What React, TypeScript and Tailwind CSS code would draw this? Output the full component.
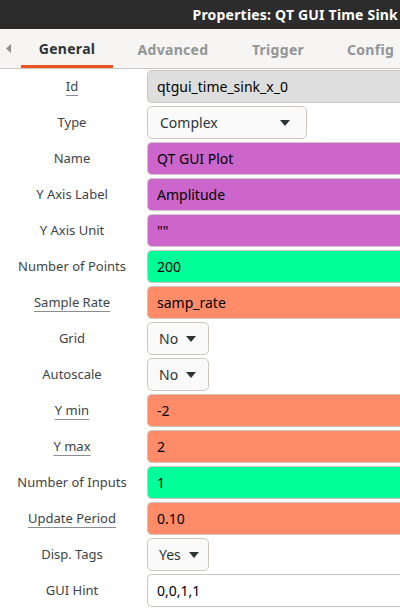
const rows: { label: string; value: string; kind: string; link?: boolean }[] = [
  { label: "Id", value: "qtgui_time_sink_x_0", kind: "id", link: true },
  { label: "Type", value: "Complex", kind: "combo-wide" },
  { label: "Name", value: "QT GUI Plot", kind: "string" },
  { label: "Y Axis Label", value: "Amplitude", kind: "string" },
  { label: "Y Axis Unit", value: '""', kind: "string" },
  { label: "Number of Points", value: "200", kind: "int" },
  { label: "Sample Rate", value: "samp_rate", kind: "raw", link: true },
  { label: "Grid", value: "No", kind: "combo" },
  { label: "Autoscale", value: "No", kind: "combo" },
  { label: "Y min", value: "-2", kind: "raw", link: true },
  { label: "Y max", value: "2", kind: "raw", link: true },
  { label: "Number of Inputs", value: "1", kind: "int" },
  { label: "Update Period", value: "0.10", kind: "raw", link: true },
  { label: "Disp. Tags", value: "Yes", kind: "combo" },
  { label: "GUI Hint", value: "0,0,1,1", kind: "plain" },
];

const fieldBg: Record<string, string> = {
  id: "bg-[#dedede]",
  string: "bg-[#cc66cc]",
  int: "bg-[#00ff99]",
  raw: "bg-[#ff8c69]",
  plain: "bg-white",
};

const Arrow = () => (
  <svg width="10" height="6" viewBox="0 0 10 6" className="shrink-0">
    <path d="M0 0h10L5 6z" fill="#2e3436" />
  </svg>
);

const Field = ({ value, kind }: { value: string; kind: string }) => {
  if (kind === "combo-wide") {
    return (
      <div className="flex h-[33px] w-[160px] items-center justify-between rounded-[5px] border border-[#cdc7c2] bg-[#fafafa] pl-[12px] pr-[16px] text-[#2e3436]">
        <span>{value}</span>
        <Arrow />
      </div>
    );
  }
  if (kind === "combo") {
    return (
      <div className="flex h-[33px] w-[62px] items-center gap-[8px] rounded-[5px] border border-[#cdc7c2] bg-[#fafafa] pl-[11px] text-[#2e3436]">
        <span>{value}</span>
        <Arrow />
      </div>
    );
  }
  return (
    <div
      className={`flex h-[33px] flex-1 items-center rounded-l-[5px] border border-r-0 border-[#cdc7c2] pl-[9px] text-black ${fieldBg[kind]}`}
    >
      {value}
    </div>
  );
};

export default function App() {
  return (
    <div className="h-[612px] w-[400px] overflow-hidden bg-white font-['Noto_Sans',sans-serif]">
      <div className="flex h-[29px] items-center justify-end overflow-hidden whitespace-nowrap bg-[#2c2c2c] pr-[2px] text-[14px] font-bold tracking-[0.2px] text-white">
        Properties: QT GUI Time Sink
      </div>
      <div className="flex h-[40px] items-stretch overflow-hidden border-b border-[#cdc7c2] bg-[#f6f5f4] text-[14px] font-bold whitespace-nowrap">
        <div className="flex w-[21px] shrink-0 items-center pl-[6px]">
          <svg width="5" height="9" viewBox="0 0 5 9">
            <path d="M5 0v9L0 4.5z" fill="#8b8e8f" />
          </svg>
        </div>
        <div className="flex w-[92px] shrink-0 items-center justify-center border-b-[3px] border-[#e95420] pt-[3px] tracking-[0.3px] text-[#2e3436]">
          General
        </div>
        <div className="flex w-[120px] shrink-0 items-center justify-center pt-[1px] tracking-[0.3px] text-[#929595]">Advanced</div>
        <div className="flex w-[90px] shrink-0 items-center justify-center pt-[1px] tracking-[0.3px] text-[#929595]">Trigger</div>
        <div className="flex w-[95px] shrink-0 items-center justify-center pt-[1px] tracking-[0.3px] text-[#929595]">Config</div>
      </div>
      <div className="flex flex-col gap-[3px] pt-[1px] text-[14px]">
        {rows.map((r) => (
          <div key={r.label} className="flex items-center">
            <div className="w-[147px] shrink-0 pr-[3px] text-center text-[13px] text-[#3d4448]">
              <span className={r.link ? "underline decoration-[#8b8e8f] underline-offset-[4px]" : ""}>
                {r.label}
              </span>
            </div>
            <Field value={r.value} kind={r.kind} />
          </div>
        ))}
      </div>
    </div>
  );
}
